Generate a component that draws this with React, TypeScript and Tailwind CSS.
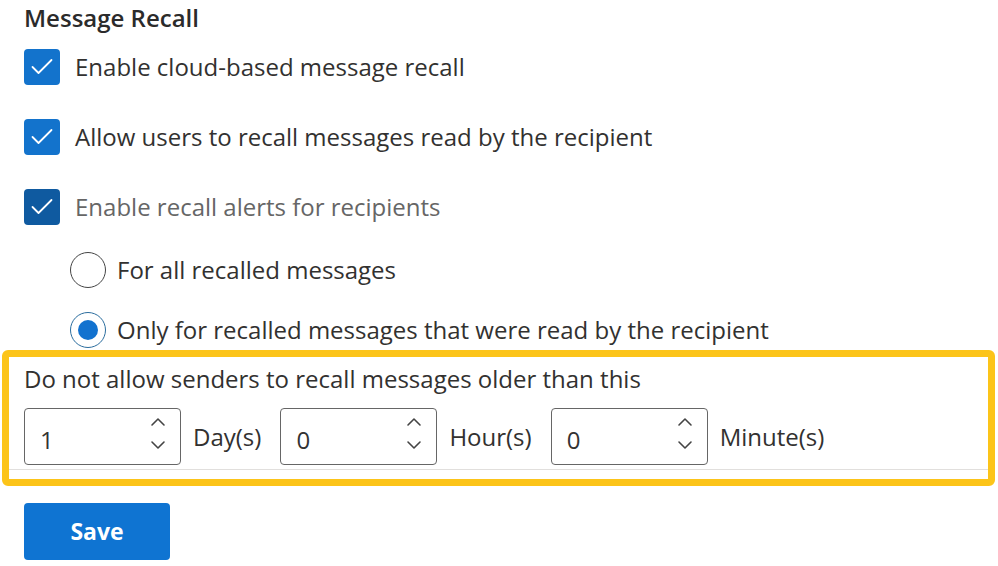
import React from "react"

const font = { fontFamily: '"Open Sans", "Noto Sans", sans-serif' }

const Check = ({ dark }: { dark?: boolean }) => (
  <div
    className={`flex items-center justify-center w-[36px] h-[36px] rounded-[4px] ${
      dark ? "bg-[#0f5aa0]" : "bg-[#1373cc]"
    }`}
  >
    <svg width="36" height="36" viewBox="0 0 36 36" fill="none">
      <path d="M8.5 18 L14.5 24 L27.5 11" stroke="white" strokeWidth="1.8" strokeLinecap="round" strokeLinejoin="round" />
    </svg>
  </div>
)

const Radio = ({ checked }: { checked?: boolean }) => (
  <div
    className={`flex items-center justify-center w-[36px] h-[36px] rounded-full border-[1.5px] ${
      checked ? "border-[#2b6d9e]" : "border-[#444]"
    }`}
  >
    {checked && <div className="w-[20px] h-[20px] rounded-full bg-[#1272cf]" />}
  </div>
)

const Spin = ({ value }: { value: string }) => (
  <div className="relative flex items-center w-[157px] h-[57px] rounded-[4px] border border-[#666] bg-white">
    <span className="pl-[15px] pt-[6px] text-[24px] text-[#333]">{value}</span>
    <div className="absolute right-[14px] top-[8px] flex flex-col items-center gap-[13px]">
      <svg width="16" height="10" viewBox="0 0 16 10" fill="none">
        <path d="M2 8 L8 2 L14 8" stroke="#444" strokeWidth="1.6" strokeLinecap="round" strokeLinejoin="round" />
      </svg>
      <svg width="16" height="10" viewBox="0 0 16 10" fill="none">
        <path d="M2 2 L8 8 L14 2" stroke="#444" strokeWidth="1.6" strokeLinecap="round" strokeLinejoin="round" />
      </svg>
    </div>
  </div>
)

const App = () => {
  return (
    <main className="w-[998px] h-[566px] bg-white text-[#323130] overflow-hidden" style={font}>
      <h1 className="pl-[24px] pt-[2px] text-[24px] font-semibold leading-[32px] text-[#2b2b2b]">Message Recall</h1>

      <div className="flex flex-col gap-[34px] pl-[24px] mt-[15px]">
        <label className="flex items-center gap-[15px] h-[36px]">
          <Check />
          <span className="text-[24px]">Enable cloud-based message recall</span>
        </label>
        <label className="flex items-center gap-[15px] h-[36px]">
          <Check />
          <span className="text-[24px]">Allow users to recall messages read by the recipient</span>
        </label>
        <label className="flex items-center gap-[15px] h-[36px]">
          <Check dark />
          <span className="text-[24px] text-[#666]">Enable recall alerts for recipients</span>
        </label>
      </div>

      <div className="flex flex-col gap-[24px] pl-[70px] mt-[27px]">
        <label className="flex items-center gap-[11px] h-[36px]">
          <Radio />
          <span className="text-[24px]">For all recalled messages</span>
        </label>
        <label className="flex items-center gap-[11px] h-[36px]">
          <Radio checked />
          <span className="text-[24px]">Only for recalled messages that were read by the recipient</span>
        </label>
      </div>

      <section className="ml-[2px] mt-[2px] w-[993px] h-[136px] border-[7px] border-[#fcc419] rounded-[6px] flex flex-col">
        <p className="pl-[15px] pt-[6px] text-[24px] leading-[32px]">Do not allow senders to recall messages older than this</p>
        <div className="flex items-center pl-[15px] mt-[13px]">
          <Spin value="1" />
          <span className="ml-[12px] mr-[19px] text-[24px]">Day(s)</span>
          <Spin value="0" />
          <span className="ml-[12px] mr-[19px] text-[24px]">Hour(s)</span>
          <Spin value="0" />
          <span className="ml-[12px] text-[24px]">Minute(s)</span>
        </div>
        <div className="mt-[4px] h-px bg-[#e1dfdd]" />
      </section>

      <button className="ml-[24px] mt-[17px] w-[146px] h-[57px] rounded-[4px] bg-[#0f74d2] text-white text-[23px] font-bold">
        Save
      </button>
    </main>
  )
}

export default App
